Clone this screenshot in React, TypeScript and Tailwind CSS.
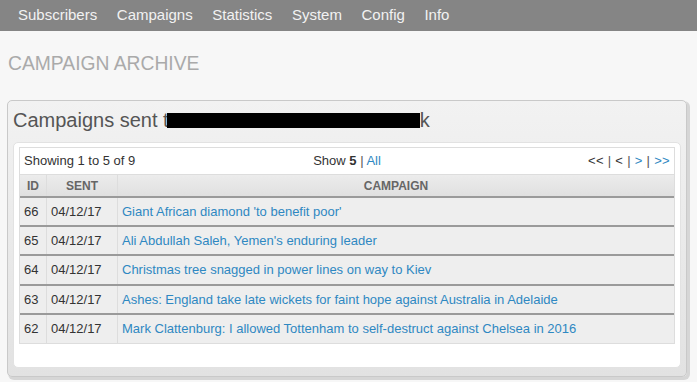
import React from 'react'

const navItems = ['Subscribers', 'Campaigns', 'Statistics', 'System', 'Config', 'Info']

const rows = [
  { id: 66, sent: '04/12/17', title: "Giant African diamond 'to benefit poor'", h: 'h-[29px]' },
  { id: 65, sent: '04/12/17', title: "Ali Abdullah Saleh, Yemen's enduring leader", h: 'h-[29px]' },
  { id: 64, sent: '04/12/17', title: 'Christmas tree snagged in power lines on way to Kiev', h: 'h-[30px]' },
  { id: 63, sent: '04/12/17', title: 'Ashes: England take late wickets for faint hope against Australia in Adelaide', h: 'h-[29px]' },
  { id: 62, sent: '04/12/17', title: 'Mark Clattenburg: I allowed Tottenham to self-destruct against Chelsea in 2016', h: 'h-[29px]' },
]

export default function App() {
  return (
    <div className="min-h-screen bg-[#f7f7f7] font-['Liberation_Sans',Arial,sans-serif] text-[13px] text-[#333]">
      <nav className="flex h-[31px] items-center gap-[19.6px] bg-[#858585] pl-[18px] text-[15px] text-[#f2f2f2]">
        {navItems.map((item) => (
          <span key={item}>{item}</span>
        ))}
      </nav>

      <h1 className="ml-[8px] mt-[22px] text-[19.3px] leading-[22px] text-[#aaaaaa]">CAMPAIGN ARCHIVE</h1>

      <div className="ml-[7px] mt-[25px] w-[680px] rounded-[5px] border border-[#c9c9c9] bg-gradient-to-b from-[#f2f2f2] to-[#e2e2e2] pb-[8px] shadow-[2px_2px_0_1px_#d6d6d6]">
        <div className="pl-[5px] pt-[7px] pb-[10px] text-[20px] leading-[24px] text-[#555]">
          Campaigns sent t
          <span className="ml-[-2px] inline-block h-[15px] w-[253px] bg-black align-[-1px]" />
          <span>k</span>
        </div>

        <div className="mx-[5px] rounded-[5px] border border-[#e2e2e2] bg-white px-[5px] pt-[4px] pb-[23px]">
          <div className="border border-[#dddddd] border-b-0">
            <div className="grid h-[27px] grid-cols-[1fr_auto_1fr] items-center border-b border-[#dddddd] px-[4px]">
              <span>Showing 1 to 5 of 9</span>
              <span>
                Show <b>5</b> <span className="text-[#555]">|</span> <a className="text-[#2e88c2]">All</a>
              </span>
              <span className="justify-self-end tracking-[0.3px]">
                {'<<'} <span className="text-[#555]">|</span> {'<'} <span className="text-[#555]">|</span>{' '}
                <a className="text-[#2e88c2]">{'>'}</a> <span className="text-[#555]">|</span>{' '}
                <a className="text-[#2e88c2]">{'>>'}</a>
              </span>
            </div>

            <div className="grid h-[23px] grid-cols-[26px_71px_1fr] border-b-2 border-[#9a9a9a] bg-gradient-to-b from-[#ececec] to-[#e0e0e0] text-[12px] font-bold text-[#666]">
              <div className="flex items-center justify-center">ID</div>
              <div className="flex items-center justify-center border-l border-[#dddddd]">SENT</div>
              <div className="flex items-center justify-center border-l border-[#dddddd]">CAMPAIGN</div>
            </div>

            {rows.map((r, i) => (
              <div
                key={r.id}
                className={
                  'grid grid-cols-[26px_71px_1fr] bg-[#eeeeee] ' +
                  r.h +
                  ' ' +
                  (i < rows.length - 1 ? 'border-b-2 border-[#9a9a9a]' : 'border-b border-[#dddddd]')
                }
              >
                <div className="flex items-center pl-[4px]">{r.id}</div>
                <div className="flex items-center border-l border-[#dddddd] pl-[4px]">{r.sent}</div>
                <div className="flex items-center border-l border-[#dddddd] pl-[4px]">
                  <a className="text-[#2e88c2]">{r.title}</a>
                </div>
              </div>
            ))}
          </div>
        </div>
      </div>
    </div>
  )
}
